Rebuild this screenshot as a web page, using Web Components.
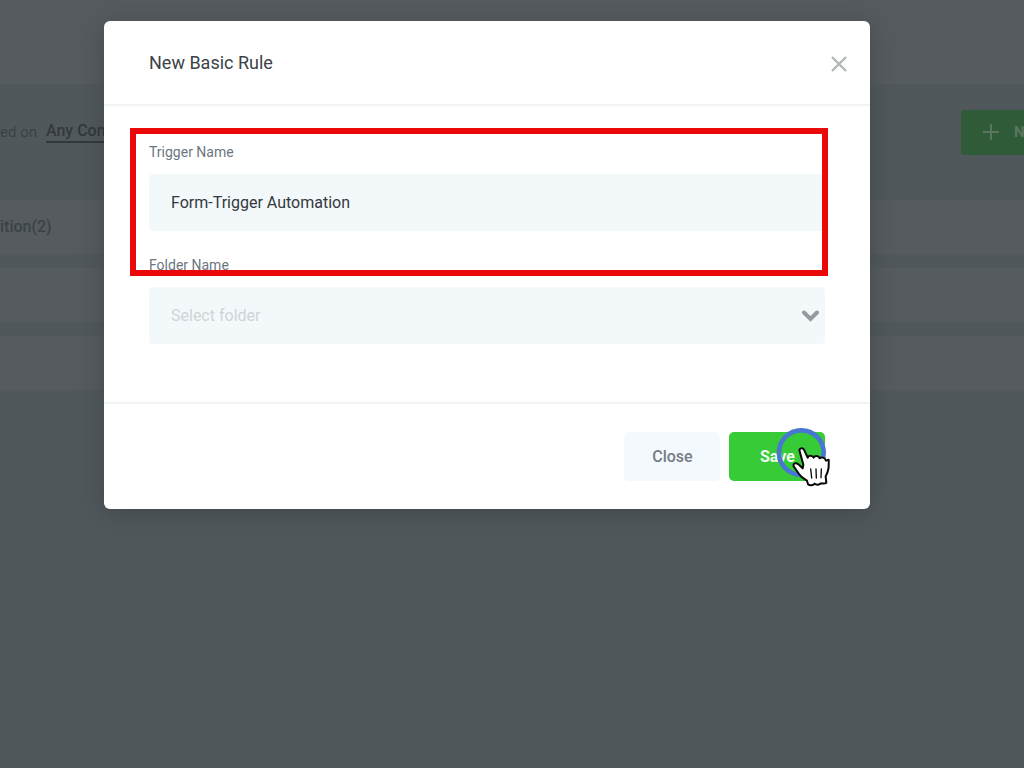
<!DOCTYPE html>
<html lang="en">
<head>
<meta charset="utf-8">
<meta name="viewport" content="width=device-width, initial-scale=1">
<title>New Basic Rule</title>
<style>
  html, body { margin: 0; min-height: 100%; background: #51585b; }
  body { font-family: Roboto, "Liberation Sans", sans-serif; font-size: 16px; line-height: 20px; }
</style>
</head>
<body>
<rule-app></rule-app>

<script>
const define = (name, html, setup) => {
  const template = document.createElement("template");
  template.innerHTML = html;
  customElements.define(name, class extends HTMLElement {
    constructor() {
      super();
      this.attachShadow({ mode: "open" }).append(template.content.cloneNode(true));
    }
    connectedCallback() { if (setup) setup(this, this.shadowRoot); }
  });
};

/* Dimmed page behind the dialog */
define("rule-list", `
<style>
  :host { display: block; overflow: hidden; color: #3b4246; }
  header { height: 84px; background: #565b5f; }
  .filters { display: flex; align-items: center; height: 96px; padding-bottom: 20px; white-space: nowrap; }
  .filters span { margin-right: 9px; font-size: 15px; }
  .filters a { color: #33383c; font-weight: 500; text-decoration: none; border-bottom: 2px solid #33383c; }
  .filters button { display: flex; align-items: center; gap: 14px; flex: none; width: 160px; height: 45px; margin: 0 -97px 0 auto; padding: 0 21px; border: 0; border-radius: 4px; background: #2f5b38; color: #5b7660; font: 700 15px/20px Roboto, sans-serif; }
  ul { display: grid; gap: 14px; margin: 0; padding: 0; list-style: none; }
  li { display: flex; align-items: center; height: 54px; background: #565b5f; font-weight: 500; }
</style>
<header></header>
<div class="filters">
  <span>ed on</span><a href="#">Any Con</a>
  <button type="button"><svg width="18" height="18" viewBox="0 0 18 18" stroke="currentColor" stroke-width="2" aria-hidden="true"><path d="M9 1v16M1 9h16"/></svg>N</button>
</div>
<ul><li>ition(2)</li><li></li><li></li></ul>`);

define("form-field", `
<style>
  :host { display: grid; gap: 13px; }
  label { font-size: 14px; line-height: 18px; color: #6b767f; }
  .control { display: grid; align-items: center; }
  input, select { grid-area: 1 / 1; box-sizing: border-box; width: 100%; height: 57px; margin: 0; padding: 0 22px; border: 0; border-radius: 4px; outline: 0; appearance: none; background: #f3f8fb; color: #34393e; font: 400 16px/20px Roboto, sans-serif; }
  select { color: #cfd4d7; opacity: 1; }
  svg { grid-area: 1 / 1; justify-self: end; margin-right: 5px; pointer-events: none; }
</style>
<label for="control"></label>
<div class="control"></div>`, (host, root) => {
  root.querySelector("label").textContent = host.getAttribute("label");
  const box = root.querySelector(".control");
  if (host.hasAttribute("options")) {
    box.innerHTML = '<select id="control"><option></option></select><svg width="19" height="14" viewBox="0 0 19 14" fill="none" stroke="#959a9d" stroke-width="4" stroke-linecap="round" aria-hidden="true"><path d="M3 3.5l6.5 6.5 6.5-6.5"/></svg>';
    box.querySelector("option").textContent = host.getAttribute("options");
  } else {
    box.innerHTML = '<input id="control" type="text">';
    box.querySelector("input").value = host.getAttribute("value");
  }
});

define("dialog-button", `
<style>
  :host { display: block; }
  button { width: 96px; height: 49px; padding: 0; border: 0; border-radius: 5px; background: #f4f9fd; color: #747c84; font: 500 16px/20px Roboto, sans-serif; }
  :host([primary]) button { background: #37cb37; color: #f1fbf1; font-weight: 700; }
</style>
<button type="button"><slot></slot></button>`);

define("click-pointer", `
<style>
  :host { display: block; width: 54px; height: 60px; pointer-events: none; }
  svg { display: block; }
</style>
<svg width="54" height="60" viewBox="168 81 162 180" aria-hidden="true">
  <circle cx="244" cy="158" r="67" fill="none" stroke="#4777d2" stroke-width="14"/>
  <path d="M238 150C240 143 249 143 252 149L263 173C265 165 278 165 281 173C285 165 297 167 299 175C303 170 315 172 318 182L326 179C327 203 326 211 317 229L319 248C313 253 307 250 303 250C298 253 290 257 284 251C278 256 270 257 264 253L261 242C249 235 243 232 237 222L221 199C218 189 229 187 235 193L248 205L250 194Z" fill="#fff" stroke="#080808" stroke-width="6" stroke-linejoin="round"/>
  <path d="M272 207l3 27M288 207l1 27M304 207l-1 26" fill="none" stroke="#080808" stroke-width="4" stroke-linecap="round"/>
</svg>`);

define("rule-dialog", `
<style>
  :host { display: block; border-radius: 6px; background: #fff; box-shadow: 0 4px 24px rgba(35, 40, 45, .35); }
  header { display: flex; align-items: center; justify-content: space-between; box-sizing: border-box; height: 85px; padding: 0 22px 0 45px; border-bottom: 2px solid #f1f3f5; }
  h1 { margin: 0; font-size: 18px; line-height: 24px; font-weight: 400; color: #3c4247; }
  .dismiss { display: grid; padding: 0; border: 0; background: none; color: #b2b7b9; }
  main { position: relative; display: grid; gap: 25px; padding: 37px 45px 58px; }
  .highlight { position: absolute; inset: 22px 42px auto 26px; box-sizing: border-box; height: 148px; border: 6px solid #ea0808; pointer-events: none; }
  footer { display: flex; justify-content: flex-end; gap: 9px; padding: 28px 45px; border-top: 2px solid #f1f3f5; }
  .save { position: relative; }
  click-pointer { position: absolute; top: -5px; left: 47px; }
</style>
<header>
  <h1>New Basic Rule</h1>
  <button class="dismiss" type="button" aria-label="Dismiss"><svg width="18" height="18" viewBox="0 0 18 18" stroke="currentColor" stroke-width="2.4" aria-hidden="true"><path d="M2 3l14 14M16 3L2 17"/></svg></button>
</header>
<main>
  <form-field label="Trigger Name" value="Form-Trigger Automation"></form-field>
  <form-field label="Folder Name" options="Select folder"></form-field>
  <div class="highlight"></div>
</main>
<footer>
  <dialog-button>Close</dialog-button>
  <div class="save"><dialog-button primary>Save</dialog-button><click-pointer></click-pointer></div>
</footer>`);

define("rule-app", `
<style>
  :host { display: grid; min-height: 100vh; align-items: start; }
  rule-list, .overlay { grid-area: 1 / 1; min-width: 0; }
  .overlay { position: relative; padding: 21px 15% 21px 104px; }
</style>
<rule-list></rule-list>
<div class="overlay"><rule-dialog role="dialog" aria-label="New Basic Rule"></rule-dialog></div>`);
</script>
</body>
</html>
